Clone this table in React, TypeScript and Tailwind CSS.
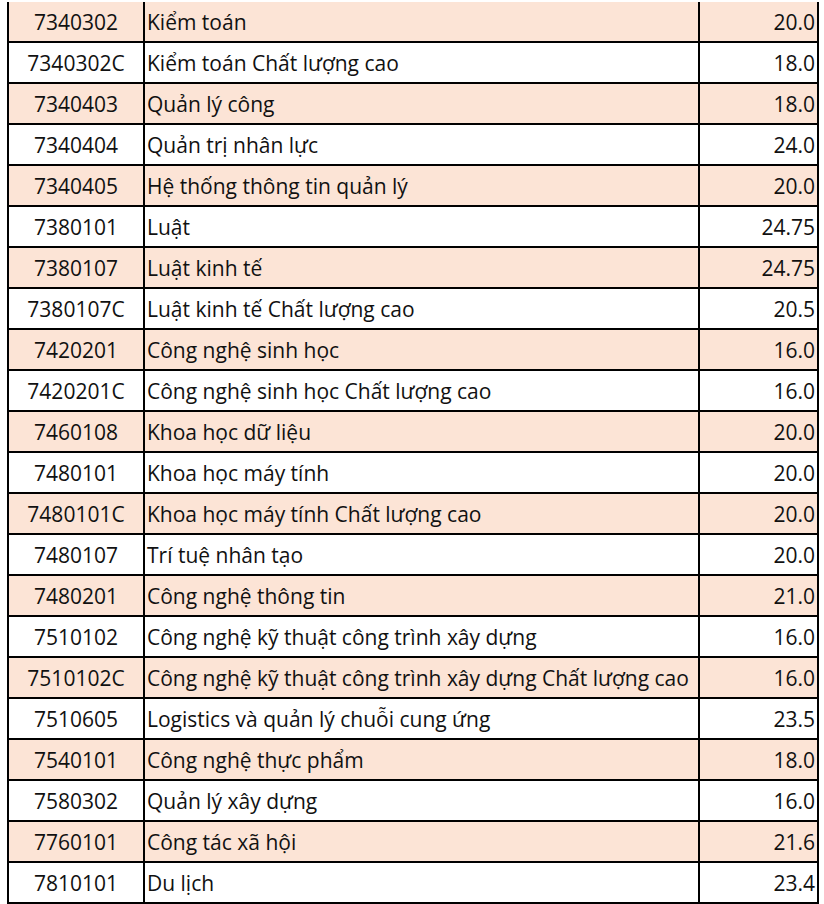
const rows: [string, string, string][] = [
  ["7340302", "Kiểm toán", "20.0"],
  ["7340302C", "Kiểm toán Chất lượng cao", "18.0"],
  ["7340403", "Quản lý công", "18.0"],
  ["7340404", "Quản trị nhân lực", "24.0"],
  ["7340405", "Hệ thống thông tin quản lý", "20.0"],
  ["7380101", "Luật", "24.75"],
  ["7380107", "Luật kinh tế", "24.75"],
  ["7380107C", "Luật kinh tế Chất lượng cao", "20.5"],
  ["7420201", "Công nghệ sinh học", "16.0"],
  ["7420201C", "Công nghệ sinh học Chất lượng cao", "16.0"],
  ["7460108", "Khoa học dữ liệu", "20.0"],
  ["7480101", "Khoa học máy tính", "20.0"],
  ["7480101C", "Khoa học máy tính Chất lượng cao", "20.0"],
  ["7480107", "Trí tuệ nhân tạo", "20.0"],
  ["7480201", "Công nghệ thông tin", "21.0"],
  ["7510102", "Công nghệ kỹ thuật công trình xây dựng", "16.0"],
  ["7510102C", "Công nghệ kỹ thuật công trình xây dựng Chất lượng cao", "16.0"],
  ["7510605", "Logistics và quản lý chuỗi cung ứng", "23.5"],
  ["7540101", "Công nghệ thực phẩm", "18.0"],
  ["7580302", "Quản lý xây dựng", "16.0"],
  ["7760101", "Công tác xã hội", "21.6"],
  ["7810101", "Du lịch", "23.4"],
];

export default function App() {
  return (
    <div className="w-[824px] h-[904px] bg-white pt-[2px] overflow-hidden">
      <div
        className="ml-[7px] w-[812px] border-x-2 border-black text-[21px] text-[#111]"
        style={{ fontFamily: '"Open Sans", "Liberation Sans", sans-serif' }}
      >
        {rows.map(([code, name, score], i) => (
          <div
            key={code}
            className={`flex h-[41px] border-b-2 border-black ${i % 2 === 0 ? "bg-[#fce4d6]" : "bg-white"}`}
          >
            <div className="w-[136px] border-r-2 border-black flex items-center justify-center pt-[2px]">
              {code}
            </div>
            <div className="w-[555px] border-r-2 border-black flex items-center pl-[2px] pt-[2px] whitespace-nowrap">
              {name}
            </div>
            <div className="flex-1 flex items-center justify-end pr-[2px] pt-[2px]">
              {score}
            </div>
          </div>
        ))}
      </div>
    </div>
  );
}
